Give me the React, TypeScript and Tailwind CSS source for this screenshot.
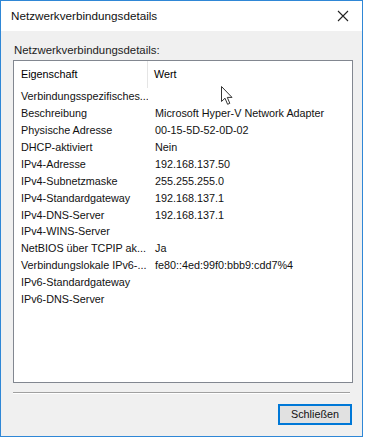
import React from 'react';

const rows: [string, string][] = [
  ['Verbindungsspezifisches...', ''],
  ['Beschreibung', 'Microsoft Hyper-V Network Adapter'],
  ['Physische Adresse', '00-15-5D-52-0D-02'],
  ['DHCP-aktiviert', 'Nein'],
  ['IPv4-Adresse', '192.168.137.50'],
  ['IPv4-Subnetzmaske', '255.255.255.0'],
  ['IPv4-Standardgateway', '192.168.137.1'],
  ['IPv4-DNS-Server', '192.168.137.1'],
  ['IPv4-WINS-Server', ''],
  ['NetBIOS über TCPIP ak...', 'Ja'],
  ['Verbindungslokale IPv6-...', 'fe80::4ed:99f0:bbb9:cdd7%4'],
  ['IPv6-Standardgateway', ''],
  ['IPv6-DNS-Server', ''],
];

export default function App() {
  return (
    <div
      className="relative w-[370px] h-[441px] bg-white text-[#000] text-[10.8px]"
      style={{ fontFamily: '"Liberation Sans", Arial, sans-serif' }}
    >
      <div className="flex flex-col w-[363px] h-[437px] border border-[#2f87d6] bg-[#f0f0f0]">
        {/* Title bar */}
        <div className="flex items-center justify-between h-[30px] bg-white pl-[10px] pr-[13px]">
          <span className="text-[11.7px] text-[#111]">Netzwerkverbindungsdetails</span>
          <svg width="12" height="12" viewBox="0 0 12 12">
            <path d="M1 1 L11 11 M11 1 L1 11" stroke="#222" strokeWidth="1.1" fill="none" />
          </svg>
        </div>

        {/* Body */}
        <div className="flex flex-col flex-1 px-[12px] pt-[11px]">
          <div className="text-[11.4px] text-[#222] leading-[16px] pl-[1px]">Netzwerkverbindungsdetails:</div>
          <div className="mt-[2px] h-[323px] w-[340px] border border-[#828790] bg-white">
            <div className="flex h-[27px] items-center">
              <div className="w-[134px] h-full flex items-center pl-[7px] border-r border-[#e5e5e5]">Eigenschaft</div>
              <div className="pl-[6px]">Wert</div>
            </div>
            {rows.map(([k, v], i) => (
              <div key={i} className="flex h-[16.9px] items-center text-[#111]">
                <div className="w-[134px] pl-[7px] whitespace-nowrap overflow-hidden">{k}</div>
                <div className="pl-[7px] whitespace-nowrap">{v}</div>
              </div>
            ))}
          </div>

          <div className="mt-[9px] h-[2px] w-[337px] border-t border-[#a0a0a0] border-b border-b-white" />

          <div className="flex justify-end mt-[10px]">
            <button className="w-[74px] h-[21px] border-2 border-[#0078d7] bg-[#e1e1e1] text-[10.8px] text-[#111] leading-none mr-[-2px]">
              Schließen
            </button>
          </div>
        </div>
      </div>

      {/* Mouse cursor */}
      <svg className="absolute left-[221px] top-[86px]" width="13" height="20" viewBox="0 0 13 20">
        <path
          d="M0.5 0.5 L0.5 15.5 L4 12.2 L6.6 18.3 L8.8 17.3 L6.3 11.4 L11 11.4 Z"
          fill="#fff"
          stroke="#333"
          strokeWidth="1"
          strokeLinejoin="round"
        />
      </svg>
    </div>
  );
}
